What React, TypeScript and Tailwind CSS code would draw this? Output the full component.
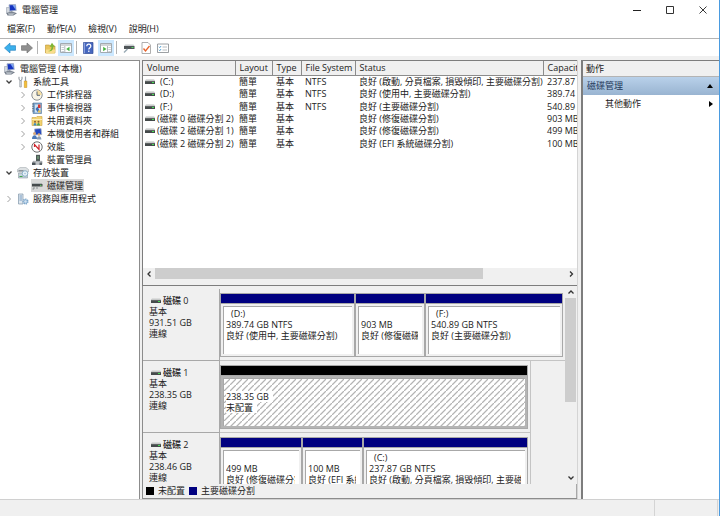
import React, { ReactNode } from 'react';

interface Volume {
  name: string;
  fs: string;
  status: string;
  capacity: string;
}

interface Partition {
  letter?: string;
  size: string;
  status: string;
  width: string;
  unallocated?: boolean;
}

interface Disk {
  name: string;
  size: string;
  partitions: Partition[];
}

const volumes: Volume[] = [
  { name: '(C:)', fs: 'NTFS', status: '良好 (啟動, 分頁檔案, 損毀傾印, 主要磁碟分割)', capacity: '237.87 GB' },
  { name: '(D:)', fs: 'NTFS', status: '良好 (使用中, 主要磁碟分割)', capacity: '389.74 GB' },
  { name: '(F:)', fs: 'NTFS', status: '良好 (主要磁碟分割)', capacity: '540.89 GB' },
  { name: '(磁碟 0 磁碟分割 2)', fs: '', status: '良好 (修復磁碟分割)', capacity: '903 MB' },
  { name: '(磁碟 2 磁碟分割 1)', fs: '', status: '良好 (修復磁碟分割)', capacity: '499 MB' },
  { name: '(磁碟 2 磁碟分割 2)', fs: '', status: '良好 (EFI 系統磁碟分割)', capacity: '100 MB' },
];

const disks: Disk[] = [
  {
    name: '磁碟 0',
    size: '931.51 GB',
    partitions: [
      { letter: '(D:)', size: '389.74 GB NTFS', status: '良好 (使用中, 主要磁碟分割)', width: 'w-[135px]' },
      { size: '903 MB', status: '良好 (修復磁碟分割)', width: 'w-[70px]' },
      { letter: '(F:)', size: '540.89 GB NTFS', status: '良好 (主要磁碟分割)', width: 'w-[138px]' },
    ],
  },
  {
    name: '磁碟 1',
    size: '238.35 GB',
    partitions: [{ size: '238.35 GB', status: '未配置', width: 'w-[308px]', unallocated: true }],
  },
  {
    name: '磁碟 2',
    size: '238.46 GB',
    partitions: [
      { size: '499 MB', status: '良好 (修復磁碟分割)', width: 'w-[82px]' },
      { size: '100 MB', status: '良好 (EFI 系統磁碟分割)', width: 'w-[61px]' },
      { letter: '(C:)', size: '237.87 GB NTFS', status: '良好 (啟動, 分頁檔案, 損毀傾印, 主要磁碟分割)', width: 'w-[165px]' },
    ],
  },
];

const Svg = ({ children, className = 'size-3' }: { children: ReactNode; className?: string }) => (
  <svg viewBox="0 0 12 12" className={`${className} shrink-0`} fill="none" aria-hidden="true">
    {children}
  </svg>
);

const ComputerIcon = () => (
  <Svg>
    <path d="M.5 3.500h3v6h-3z" fill="#d3d8df" stroke="#8a94a2" strokeWidth=".5" />
    <path d="M3 .8l6.500-.3.7 6-6.500.6z" fill="#1634c0" stroke="#a9b4c8" strokeWidth=".9" />
    <path d="M6.500 1l2.600-.1.600 5.200z" fill="#7ea5f0" />
    <path d="M.5 9l5-1.800 5.500 2-3.500 2.300H1.500z" fill="#737c89" />
    <path d="M2 9.300h6.500M2.500 10.500h5" stroke="#dde2e8" strokeWidth=".6" />
  </Svg>
);

const ToolsIcon = () => (
  <Svg>
    <path d="M2 .8v2.700l1.500 1 1.500-1V.8" stroke="#8b929b" strokeWidth="1" />
    <path d="M2.800 4.500h1.500v6.500H2.800z" fill="#e6e9ec" stroke="#8b929b" strokeWidth=".7" />
    <path d="M8.500.5v5" stroke="#9a9fa6" strokeWidth="1.200" />
    <path d="M7.300 5h2.500v6.500H7.300z" fill="#f6c136" stroke="#c08a1e" strokeWidth=".5" />
  </Svg>
);

const ClockIcon = () => (
  <Svg>
    <circle cx="6" cy="6" r="5.200" fill="#f8f4e6" stroke="#8a9096" />
    <path d="M6 6V1.300A4.700 4.700 0 0 1 10.700 6z" fill="#f5dda0" />
    <path d="M6 2.500V6.300h3" stroke="#47586c" strokeWidth=".9" />
  </Svg>
);

const EventIcon = () => (
  <Svg>
    <path d="M2 1h8.500v10.500H2z" fill="#7ba6cf" stroke="#56779c" strokeWidth=".6" />
    <path d="M1 2h2M1 4.300h2M1 6.600h2M1 9h2" stroke="#5c6670" strokeWidth=".7" />
    <path d="M4 2.500h5.500v8H4z" fill="#d3e3f1" />
    <path d="M7 2.500h2.500v3.500H7z" fill="#d9362f" />
    <path d="M4.500 7l2-2.500 2 4-2 1.500z" fill="#3c6db5" />
    <path d="M7 8.500h2.500v2H7z" fill="#edc24d" />
  </Svg>
);

const SharedFolderIcon = () => (
  <Svg>
    <path d="M1 2.500h4l1-1h5v9H1z" fill="#f3d371" stroke="#cfa441" strokeWidth=".6" />
    <path d="M1 4.500h10" stroke="#fff0b8" />
    <circle cx="4" cy="6.700" r="1" fill="#8a5f32" />
    <circle cx="7.500" cy="6.700" r="1" fill="#8a5f32" />
    <path d="M2.500 10.500c0-3.500 3-3.500 3 0z" fill="#3a8bc4" />
    <path d="M6 10.500c0-3.500 3-3.500 3 0z" fill="#4c9e54" />
  </Svg>
);

const UsersIcon = () => (
  <Svg>
    <path d="M3.500 1l6.500-.5.7 6-6.500.5z" fill="#2348c0" stroke="#a9b4c8" strokeWidth=".8" />
    <circle cx="3.500" cy="5.500" r="1.500" fill="#d8a878" />
    <path d="M1 11c0-5 5-5 5 0z" fill="#4c79b8" />
    <circle cx="8" cy="6.500" r="1.300" fill="#d8a878" />
    <path d="M5.800 11.500c0-4.500 4.600-4.500 4.600 0z" fill="#8a9db5" />
  </Svg>
);

const PerformanceIcon = () => (
  <Svg>
    <circle cx="6" cy="6" r="5.200" fill="#fff" stroke="#6e6e6e" />
    <path d="M3.500 6V3.500l4.500 5v-5" stroke="#cf2129" strokeWidth="1.200" />
  </Svg>
);

const DeviceIcon = () => (
  <Svg>
    <path d="M5 .8h4v6.500H5z" fill="#4f5a57" />
    <path d="M7 2v3" stroke="#8fd095" strokeWidth=".8" />
    <path d="M2 7.300h9v3H2z" fill="#c3c7ca" stroke="#8b9195" strokeWidth=".6" />
    <path d="M1 8.500h3.500v2.500H1z" fill="#4b5358" />
    <path d="M8.500 8.500H11V11H8.500z" fill="#5b6368" />
  </Svg>
);

const StorageIcon = () => (
  <Svg>
    <path d="M.5 2.500l2.500-2h6l2.500 2v2.500H.5z" fill="#dde1e3" stroke="#9aa2a7" strokeWidth=".5" />
    <path d="M1.500 3.800h5" stroke="#5e686f" strokeWidth=".9" />
    <path d="M1.500 6h9v5h-9z" fill="#c5d3dc" stroke="#7d8b94" strokeWidth=".5" />
    <circle cx="8" cy="6.500" r="2.800" fill="#e6f1f8" stroke="#6f9bb9" strokeWidth=".7" />
    <circle cx="8" cy="6.500" r=".7" fill="#8fb4cd" />
    <path d="M2.500 9.500h3" stroke="#3fa449" />
  </Svg>
);

const DiskMgmtIcon = () => (
  <Svg>
    <path d="M1 4h10.500v2.500H1z" fill="#464b4d" />
    <path d="M1 3.500h10" stroke="#a5abad" strokeWidth=".8" />
    <path d="M9 5.300h1.500" stroke="#65d96b" />
    <path d="M3 7v2H1.500M6 7v2" stroke="#777d80" strokeWidth=".8" />
  </Svg>
);

const ServicesIcon = () => (
  <Svg>
    <path d="M1.500 1h4.500v10H1.500z" fill="#dfe7ee" stroke="#7f95a9" strokeWidth=".7" />
    <path d="M2.500 3h2.500M2.500 5h2.500M2.500 7h2.500" stroke="#5f8eb9" strokeWidth=".8" />
    <circle cx="8.500" cy="8.500" r="2.300" stroke="#7ea8cc" strokeWidth="1.500" strokeDasharray="1.200 .7" />
    <circle cx="8.500" cy="8.500" r="1.700" fill="#d2e3f2" stroke="#6c9bc5" strokeWidth=".6" />
  </Svg>
);

const DriveIcon = () => (
  <svg viewBox="0 0 10 6" className="h-1.5 w-2.5 shrink-0" aria-hidden="true">
    <path d="M1 0h8l1 2H0z" fill="#dcdddd" />
    <path d="M0 2h10v3H0z" fill="#454a4b" />
    <path d="M0 2h10" stroke="#9a9d9e" strokeWidth=".6" />
    <path d="M7 3h2v1H7z" fill="#44e052" />
  </svg>
);

const Chevron = ({ open }: { open: boolean }) => (
  <svg viewBox="0 0 8 8" className="size-2 shrink-0" fill="none" aria-hidden="true">
    {open ? (
      <path d="M1.500 2.500L4 5l2.500-2.500" stroke="#404040" strokeWidth="1.300" />
    ) : (
      <path d="M2.500 1l3 3-3 3" stroke="#a0a0a0" />
    )}
  </svg>
);

interface TreeNode {
  label: string;
  icon: ReactNode;
  indent: string;
  open?: boolean;
  leaf?: boolean;
  selected?: boolean;
}

const tree: TreeNode[] = [
  { label: '系統工具', icon: <ToolsIcon />, indent: 'pl-[5px]', open: true },
  { label: '工作排程器', icon: <ClockIcon />, indent: 'pl-[19px]' },
  { label: '事件檢視器', icon: <EventIcon />, indent: 'pl-[19px]' },
  { label: '共用資料夾', icon: <SharedFolderIcon />, indent: 'pl-[19px]' },
  { label: '本機使用者和群組', icon: <UsersIcon />, indent: 'pl-[19px]' },
  { label: '效能', icon: <PerformanceIcon />, indent: 'pl-[19px]' },
  { label: '裝置管理員', icon: <DeviceIcon />, indent: 'pl-[19px]', leaf: true },
  { label: '存放裝置', icon: <StorageIcon />, indent: 'pl-[5px]', open: true },
  { label: '磁碟管理', icon: <DiskMgmtIcon />, indent: 'pl-[19px]', leaf: true, selected: true },
  { label: '服務與應用程式', icon: <ServicesIcon />, indent: 'pl-[5px]' },
];

const ToolButton = ({ label, active, children }: { label: string; active?: boolean; children: ReactNode }) => (
  <button
    aria-label={label}
    className={`flex h-4 shrink-0 items-center justify-center ${active ? 'w-4 bg-[#cce8ff]' : 'w-[13px]'}`}
  >
    {children}
  </button>
);

const ToolSeparator = () => <div className="h-[13px] w-px shrink-0 bg-[#b4b4b4]" />;

const TitleBar = () => (
  <header className="flex h-5 shrink-0 items-center pl-1.5">
    <ComputerIcon />
    <h1 className="ml-1 flex-1">電腦管理</h1>
    <button aria-label="最小化" className="flex h-5 w-[33px] items-center justify-center">
      <svg viewBox="0 0 8 8" className="size-2" fill="none"><path d="M0 4.500h8" stroke="#222" /></svg>
    </button>
    <button aria-label="最大化" className="flex h-5 w-[33px] items-center justify-center">
      <svg viewBox="0 0 8 8" className="size-2" fill="none"><path d="M.5.5h7v7h-7z" stroke="#333" /></svg>
    </button>
    <button aria-label="關閉" className="flex h-5 w-[33px] items-center justify-center">
      <svg viewBox="0 0 8 8" className="size-2" fill="none"><path d="M.5.5l7 7M7.500.5l-7 7" stroke="#222" strokeWidth=".9" /></svg>
    </button>
  </header>
);

const MenuBar = () => (
  <nav className="flex h-[18px] shrink-0 items-center gap-3 pl-[7px]">
    {['檔案(F)', '動作(A)', '檢視(V)', '說明(H)'].map((item) => (
      <button key={item}>{item}</button>
    ))}
  </nav>
);

const Toolbar = () => (
  <div className="flex h-[18px] shrink-0 items-center border-t border-[#b4b4b4] pl-[3px]">
    <ToolButton label="上一頁">
      <Svg><path d="M.5 6L6 1v2.700h5.500v4.600H6V11z" fill="#3bb0ec" stroke="#2a86c4" strokeWidth=".7" /></Svg>
    </ToolButton>
    <div className="w-1" />
    <ToolButton label="下一頁">
      <Svg><path d="M11.500 6L6 1v2.700H.5v4.600H6V11z" fill="#8f8f8f" stroke="#747474" strokeWidth=".7" /></Svg>
    </ToolButton>
    <div className="w-1" />
    <ToolSeparator />
    <div className="w-[5px]" />
    <ToolButton label="上移一層">
      <Svg>
        <path d="M1.500 3h4l1 1H11v7H1.500z" fill="#e9c35a" stroke="#bd9632" strokeWidth=".6" />
        <path d="M2 7.500h9.500l-1 4H2z" fill="#f8dd8a" />
        <path d="M4 9c2.500 0 3.500-1.500 3.500-4.200h-2L8 .8l2.800 4H9.300C9.300 8.500 7 10 4 9z" fill="#7fb535" />
      </Svg>
    </ToolButton>
    <div className="w-0.5" />
    <ToolButton label="顯示或隱藏主控台樹狀目錄" active>
      <Svg>
        <path d="M.5 1.500h11v9H.5z" fill="#fff" stroke="#a3aab0" />
        <path d="M1 3h10" stroke="#a3aab0" />
        <path d="M4.800 4v6.500" stroke="#9ea6ac" strokeWidth=".8" />
        <path d="M1.500 5.500h2.500M1.500 7.500h2.500M1.500 9.500h2.500" stroke="#b9c2c9" strokeWidth=".8" />
        <path d="M9.500 4.800v4.400L6.200 7z" fill="#45b440" />
      </Svg>
    </ToolButton>
    <div className="w-0.5" />
    <ToolSeparator />
    <div className="w-1" />
    <ToolButton label="說明">
      <Svg>
        <path d="M1.500.5h9.500v11H1.500z" fill="#4667bf" stroke="#2f4a95" strokeWidth=".7" />
        <path d="M2.300.8v10.500" stroke="#9aafe6" />
        <path d="M4.800 4.200c0-2.700 4-2.700 4 0 0 1.500-2 1.500-2 3.200M6.800 8.600v1.400" stroke="#fff" strokeWidth="1.200" />
      </Svg>
    </ToolButton>
    <div className="w-1" />
    <ToolButton label="顯示或隱藏動作窗格" active>
      <Svg>
        <path d="M.5 1.500h11v9H.5z" fill="#fff" stroke="#a3aab0" />
        <path d="M1 3h10" stroke="#a3aab0" />
        <path d="M7.500 4v6.500" stroke="#9ea6ac" strokeWidth=".8" />
        <path d="M8.300 5.500h2.500M8.300 7.500h2.500M8.300 9.500h2.500" stroke="#b9c2c9" strokeWidth=".8" />
        <path d="M3.200 4.800v4.400L6.500 7z" fill="#45b440" />
      </Svg>
    </ToolButton>
    <div className="w-0.5" />
    <ToolSeparator />
    <div className="w-[5px]" />
    <ToolButton label="磁碟">
      <Svg>
        <path d="M2 2.500h8.500l1 1.500H1z" fill="#c9cdd0" />
        <path d="M1 4h10.500v3H1z" fill="#4f5558" />
        <path d="M8.500 5.500h2" stroke="#55dc62" />
        <path d="M4.500 7L1 10.500" stroke="#9aabb5" strokeWidth="1.400" />
      </Svg>
    </ToolButton>
    <div className="w-1" />
    <ToolButton label="內容">
      <Svg>
        <path d="M2 .5h6l2.500 2.500v8.500H2z" fill="#fff" stroke="#9a9a9a" strokeWidth=".8" />
        <path d="M3.500 6.500L5.500 9 9.500 4" stroke="#e8622a" strokeWidth="1.300" />
      </Svg>
    </ToolButton>
    <div className="w-1" />
    <ToolButton label="清單">
      <Svg>
        <path d="M.5 2h11v8.500H.5z" fill="#fff" stroke="#84898d" strokeWidth=".8" />
        <path d="M2 4.800l.8.8 1.200-1.500M2 7.800l.8.8L4 7.100" stroke="#2d8ccc" strokeWidth=".9" />
        <path d="M5.500 5H10M5.500 8H10" stroke="#a6abae" strokeWidth=".8" />
      </Svg>
    </ToolButton>
  </div>
);

const TreePane = () => (
  <aside className="w-[140px] shrink-0 overflow-hidden border-r border-t border-[#8c8c8c] bg-white pt-px">
    <ul>
      <li className="flex h-[13px] items-center gap-1 pl-1">
        <ComputerIcon />
        電腦管理 (本機)
      </li>
      {tree.map((node) => (
        <li key={node.label} className={`flex h-[13px] items-center whitespace-nowrap ${node.indent}`}>
          <button className="flex items-center">
            <span className="mr-1 flex w-2">{!node.leaf && <Chevron open={!!node.open} />}</span>
            <span className={`flex h-[13px] items-center gap-1 pr-px ${node.selected ? 'bg-[#d9d9d9]' : ''}`}>
              {node.icon}
              {node.label}
            </span>
          </button>
        </li>
      ))}
    </ul>
  </aside>
);

const columns = [
  { label: 'Volume', width: 'w-[92px]' },
  { label: 'Layout', width: 'w-[37px]' },
  { label: 'Type', width: 'w-[29px]' },
  { label: 'File System', width: 'w-[54px]' },
  { label: 'Status', width: 'w-[188px]' },
  { label: 'Capacity', width: 'w-[60px]' },
];

const VolumeList = () => (
  <section className="flex h-[226px] shrink-0 flex-col border-b border-l border-t border-[#7d7d7d] bg-white">
    <div className="min-h-0 flex-1 overflow-hidden">
      <table className="h-[89px] w-[460px] table-fixed whitespace-nowrap">
        <thead>
          <tr className="h-3.5 bg-[#f0f0f0]">
            {columns.map((col) => (
              <th
                key={col.label}
                className={`${col.width} border-b border-r border-[#8c8c8c] p-0 pl-1 text-left font-normal`}
              >
                {col.label}
              </th>
            ))}
          </tr>
        </thead>
        <tbody>
          {volumes.map((v) => (
            <tr key={v.name}>
              <td className="p-0 pl-0.5">
                <span className={`flex items-center ${v.fs ? 'gap-[5px]' : 'gap-0.5'}`}>
                  <DriveIcon />
                  {v.name}
                </span>
              </td>
              <td className="p-0 pl-1">簡單</td>
              <td className="p-0 pl-1">基本</td>
              <td className="p-0 pl-1">{v.fs}</td>
              <td className="p-0 pl-1">{v.status}</td>
              <td className="p-0 pl-1">{v.capacity}</td>
            </tr>
          ))}
        </tbody>
      </table>
    </div>
    <div className="flex h-[11px] shrink-0 items-center bg-[#f0f0f0]">
      <button aria-label="向左捲動" className="flex w-3 justify-center">
        <svg viewBox="0 0 8 8" className="size-2" fill="none"><path d="M5.500 1.500L3 4l2.500 2.500" stroke="#333" strokeWidth="1.300" /></svg>
      </button>
      <div className="flex h-full flex-1">
        <div className="h-full w-4/5 bg-[#cdcdcd]" />
      </div>
      <button aria-label="向右捲動" className="flex w-3 justify-center">
        <svg viewBox="0 0 8 8" className="size-2" fill="none"><path d="M3 1.500L5.500 4 3 6.500" stroke="#333" strokeWidth="1.300" /></svg>
      </button>
    </div>
    <div className="h-1.5 shrink-0 bg-[#f0f0f0]" />
  </section>
);

const PartitionBox = ({ part }: { part: Partition }) => (
  <div className={`${part.width} flex h-16 shrink-0 flex-col border border-[#a8a8a8] bg-[#f0f0f0]`}>
    <div className={`h-[9px] shrink-0 ${part.unallocated ? 'bg-black' : 'bg-[#000080]'}`} />
    <div className={`flex min-h-0 flex-1 border-t border-[#a8a8a8] p-0.5 ${part.unallocated ? 'bg-[#b4b4b4]' : ''}`}>
      <div
        className={`flex-1 overflow-hidden whitespace-nowrap border-l border-t border-[#a8a8a8] bg-white pl-0.5 pr-1 pt-px leading-[11px] ${
          part.unallocated
            ? 'bg-[linear-gradient(135deg,transparent_36%,#b4b4b4_50%,transparent_64%)] bg-[size:6px_6px]'
            : ''
        }`}
      >
        <p className="h-[11px] pl-[5px]">{part.letter}</p>
        <p className="overflow-hidden">
          <span className={part.unallocated ? 'inline-block bg-white pr-1' : ''}>{part.size}</span>
        </p>
        <p className="overflow-hidden">
          <span className={part.unallocated ? 'inline-block bg-white pr-1' : ''}>{part.status}</span>
        </p>
      </div>
    </div>
  </div>
);

const DiskRow = ({ disk }: { disk: Disk }) => (
  <div className="flex h-[72px] shrink-0">
    <div className="w-[77px] shrink-0 border-b border-r border-[#a8a8a8] pl-1.5 pt-1.5 leading-[11px]">
      <p className="flex items-center gap-0.5 pl-0.5 font-medium">
        <DriveIcon />
        {disk.name}
      </p>
      <p>基本</p>
      <p>{disk.size}</p>
      <p>連線</p>
    </div>
    <div className="flex shrink-0 border-b border-r border-[#c4c4c4] pr-0.5 pt-1">
      {disk.partitions.map((part) => (
        <PartitionBox key={part.size} part={part} />
      ))}
    </div>
  </div>
);

const DiskMap = () => (
  <section className="flex min-h-0 flex-1 flex-col border-b border-l border-[#8c8c8c]">
    <div className="flex min-h-0 flex-1">
      <div className="min-w-0 flex-1 overflow-hidden pt-[3px]">
        {disks.map((disk) => (
          <DiskRow key={disk.name} disk={disk} />
        ))}
      </div>
      <div className="mr-px flex w-[11px] shrink-0 flex-col bg-[#f0f0f0]">
        <button aria-label="向上捲動" className="flex h-3 items-center justify-center">
          <svg viewBox="0 0 8 8" className="size-2" fill="none"><path d="M1.500 5.500L4 3l2.500 2.500" stroke="#333" strokeWidth="1.300" /></svg>
        </button>
        <div className="flex-1">
          <div className="h-3/5 bg-[#cdcdcd]" />
        </div>
        <button aria-label="向下捲動" className="flex h-3 items-center justify-center">
          <svg viewBox="0 0 8 8" className="size-2" fill="none"><path d="M1.500 2.500L4 5l2.500-2.500" stroke="#333" strokeWidth="1.300" /></svg>
        </button>
      </div>
    </div>
    <div className="flex h-3.5 shrink-0 items-center gap-1 border-r border-[#a8a8a8] pl-[3px]">
      <span className="size-2 bg-black" />
      未配置
      <span className="size-2 bg-[#000080]" />
      主要磁碟分割
    </div>
  </section>
);

const ActionsPane = () => (
  <aside className="w-[138px] shrink-0 border-l-2 border-t border-[#7d7d7d] bg-white">
    <h2 className="flex h-4 items-center border-b border-[#b4b4b4] bg-[#f0f0f0] pl-[3px]">動作</h2>
    <button className="flex h-[18px] w-full items-center justify-between bg-linear-to-b from-[#b9d1ea] to-[#99b4d1] pl-1 pr-1.5 text-[#1e395b]">
      磁碟管理
      <svg viewBox="0 0 6 4" className="h-1 w-1.5"><path d="M0 4l3-4 3 4z" fill="#000" /></svg>
    </button>
    <button className="flex h-[18px] w-full items-center justify-between pl-[22px] pr-1.5">
      其他動作
      <svg viewBox="0 0 4 6" className="h-1.5 w-1"><path d="M0 0l4 3-4 3z" fill="#000" /></svg>
    </button>
  </aside>
);

export default function App() {
  return (
    <div className="flex h-screen flex-col overflow-hidden border-r border-[#4a9be0] bg-white font-['Open_Sans','Noto_Sans_CJK_TC',sans-serif] text-[9px] leading-3 text-[#222]">
      <TitleBar />
      <MenuBar />
      <Toolbar />
      <main className="flex min-h-0 flex-1 bg-[#f0f0f0] pt-1">
        <TreePane />
        <div className="ml-0.5 mr-[3px] flex min-w-0 flex-1 flex-col border-r border-[#d4d4d4]">
          <VolumeList />
          <DiskMap />
        </div>
        <ActionsPane />
      </main>
      <footer className="flex h-[17px] shrink-0 justify-end border-t border-[#d0d0d0] bg-[#f0f0f0] pr-px">
        <div className="w-16 border-x border-[#d4d4d4]" />
      </footer>
    </div>
  );
}
